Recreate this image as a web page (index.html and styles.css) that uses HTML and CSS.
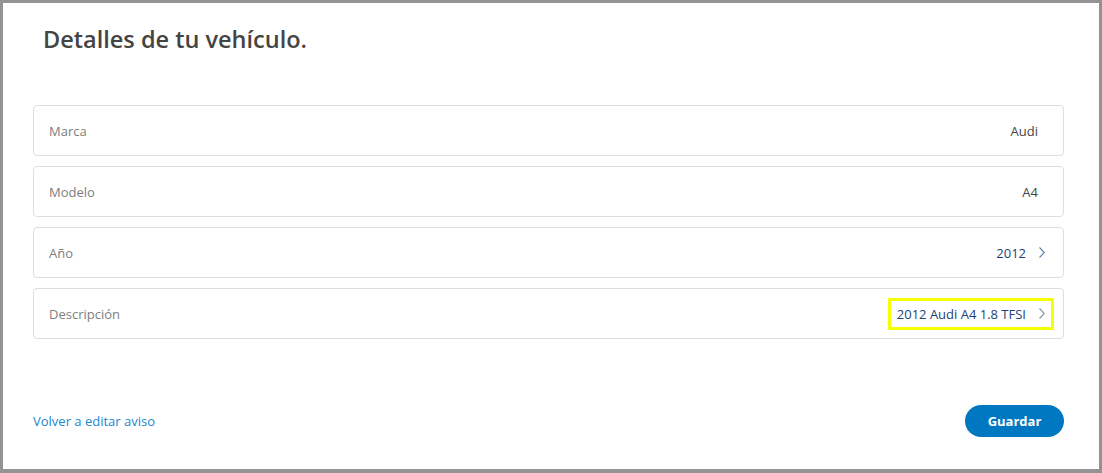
FILE: index.html
```html
<!DOCTYPE html>
<html lang="es">
<head>
    <meta charset="UTF-8">
    <meta name="viewport" content="width=device-width, initial-scale=1.0">
    <title>Detalles de tu vehículo</title>
    <link rel="stylesheet" href="styles.css">
</head>
<body>
    <div class="page">
        <h2 class="title">Detalles de tu vehículo.</h2>

        <div class="fields">
            <div class="field">
                <span class="label">Marca</span>
                <span class="value">Audi</span>
            </div>
            <div class="field">
                <span class="label">Modelo</span>
                <span class="value">A4</span>
            </div>
            <div class="field field-link">
                <span class="label">Año</span>
                <span class="value-wrap">
                    <span class="value value-blue">2012</span>
                    <svg class="chevron" width="6" height="11" viewBox="0 0 6 11"><path d="M0.5 0.5 L5.3 5.5 L0.5 10.5" fill="none" stroke="#5b7fb0" stroke-width="1.1"/></svg>
                </span>
            </div>
            <div class="field field-link">
                <span class="label">Descripción</span>
                <span class="value-wrap highlight">
                    <span class="value value-blue">2012 Audi A4 1.8 TFSI</span>
                    <svg class="chevron" width="6" height="11" viewBox="0 0 6 11"><path d="M0.5 0.5 L5.3 5.5 L0.5 10.5" fill="none" stroke="#8a8fa0" stroke-width="1.1"/></svg>
                </span>
            </div>
        </div>

        <div class="footer">
            <a href="#" class="back-link">Volver a editar aviso</a>
            <button class="save-btn">Guardar</button>
        </div>
    </div>
</body>
</html>
```

FILE: styles.css
```css
html, body {
    margin: 0;
    padding: 0;
}
body {
    background: #939393;
    padding: 3px 3px 4px 3px;
    font-family: "Open Sans", Arial, sans-serif;
}
.page {
    background: #fff;
    height: 466px;
    box-sizing: border-box;
    padding: 20px 35px 0 30px;
}
.title {
    margin: 0 0 50px 10px;
    font-size: 23.5px;
    line-height: 32px;
    font-weight: 600;
    color: #444;
}
.fields {
    display: flex;
    flex-direction: column;
    gap: 10px;
}
.field {
    display: flex;
    align-items: center;
    justify-content: space-between;
    height: 51px;
    box-sizing: border-box;
    border: 1px solid #dedede;
    border-radius: 4px;
    padding: 0 25px 0 15px;
    font-size: 13px;
}
.field-link {
    padding-right: 18px;
}
.label {
    color: #7d7d7d;
}
.value {
    color: #444;
}
.value-blue {
    color: #233f78;
}
.value-wrap {
    display: flex;
    align-items: center;
    gap: 13px;
    line-height: 14px;
}
.chevron {
    display: block;
}
.highlight {
    outline: 3px solid #f4ff00;
    outline-offset: 6px;
}
.footer {
    display: flex;
    align-items: center;
    justify-content: space-between;
    margin-top: 66px;
}
.back-link {
    color: #1b87d0;
    font-size: 13px;
    text-decoration: none;
}
.save-btn {
    background: #0078c1;
    color: #fff;
    border: none;
    border-radius: 16px;
    height: 32px;
    width: 99px;
    font-family: "Open Sans", Arial, sans-serif;
    font-size: 13px;
    font-weight: 700;
    cursor: pointer;
}
```
